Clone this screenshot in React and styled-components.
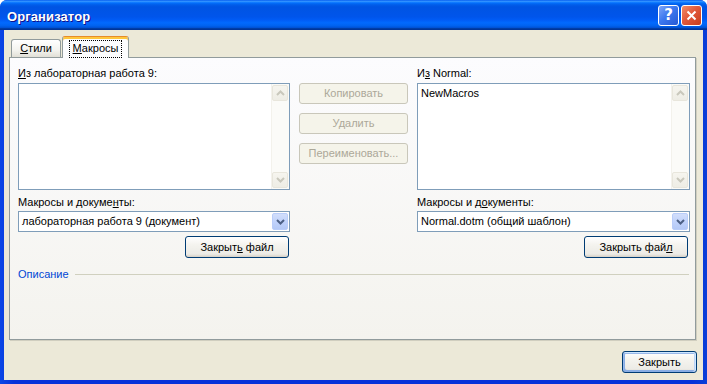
import React from "react"
import styled, { createGlobalStyle, css } from "styled-components"

const GlobalStyle = createGlobalStyle`
  html, body {
    margin: 0;
    padding: 0;
    background: #ffffff;
  }
  body {
    font-family: "Liberation Sans", Arial, sans-serif;
    font-size: 11px;
    color: #000000;
  }
`

const Window = styled.div`
  width: 707px;
  height: 384px;
  display: flex;
  flex-direction: column;
  background: linear-gradient(90deg, #0a46e6 0%, #0831d9 2%, #0831d9 98%, #0a3fd8 100%);
  border-radius: 7px 7px 0 0;
  overflow: hidden;
`

const TitleBar = styled.div`
  height: 30px;
  flex: 0 0 30px;
  display: flex;
  align-items: center;
  padding: 0 5px 0 7px;
  background: linear-gradient(
    180deg,
    #0058ee 0%,
    #3593ff 4%,
    #288eff 6%,
    #127dff 8%,
    #036ffc 10%,
    #0262ee 14%,
    #0057e5 20%,
    #0054e3 24%,
    #0055eb 56%,
    #005bf5 66%,
    #026afe 76%,
    #0062ef 86%,
    #0052d6 92%,
    #0040ab 94%,
    #003092 100%
  );
`

const Title = styled.div`
  flex: 1;
  color: #ffffff;
  font-family: "Liberation Sans", Arial, sans-serif;
  font-weight: bold;
  font-size: 13px;
  letter-spacing: 0.1px;
  text-shadow: 1px 1px #0f1089;
  padding-top: 2px;
`

const CaptionButton = styled.div`
  width: 21px;
  height: 21px;
  box-sizing: border-box;
  border: 1px solid #ffffff;
  border-radius: 3px;
  display: flex;
  align-items: center;
  justify-content: center;
  margin-left: 2px;
  ${p =>
    p.$close
      ? css`
          background: radial-gradient(circle at 90% 90%, #cc4600 0%, #dc6527 55%, #cd7546 70%, #e9b0a0 100%);
          background: linear-gradient(135deg, #f08c6a 0%, #e1593b 45%, #c93d1b 100%);
        `
      : css`
          background: linear-gradient(135deg, #7fa6f8 0%, #3c78ef 45%, #2658d4 100%);
        `}
`

const HelpMark = styled.span`
  color: #ffffff;
  font-family: "DejaVu Sans", sans-serif;
  font-weight: bold;
  font-size: 15px;
  line-height: 1;
`

const Body = styled.div`
  flex: 1;
  margin: 0 4px 4px;
  background: #ece9d8;
  display: flex;
  flex-direction: column;
  padding: 6px 7px 0 5px;
`

const TabStrip = styled.div`
  display: flex;
  align-items: flex-end;
  height: 21px;
  padding-left: 2px;
  position: relative;
  z-index: 1;
`

const Tab = styled.div`
  box-sizing: border-box;
  display: flex;
  align-items: center;
  justify-content: center;
  border: 1px solid #919b9c;
  border-bottom: none;
  border-radius: 3px 3px 0 0;
  ${p =>
    p.$active
      ? css`
          width: 67px;
          height: 22px;
          margin-bottom: -1px;
          margin-left: 1px;
          background: #fcfcfe;
          border-top: 1px solid #e68b2c;
          box-shadow: inset 0 2px 0 #ffc73c;
          padding-top: 2px;
        `
      : css`
          width: 50px;
          height: 18px;
          background: linear-gradient(180deg, #ffffff 0%, #f3f3ef 60%, #e1dfd6 100%);
        `}
`

const TabLabel = styled.span`
  padding: 1px 3px 2px;
  border: 1px dotted ${p => (p.$focused ? "#000000" : "transparent")};
  line-height: 13px;
`

const Panel = styled.div`
  flex: 1;
  border: 1px solid #919b9c;
  background: linear-gradient(180deg, #fcfcfe 0%, #f4f3ee 100%);
  box-shadow: 1px 1px 0 #d0cebf;
  padding: 8px 5px 0 8px;
  display: grid;
  grid-template-columns: 272px 109px 273px;
  grid-template-rows: auto auto;
  column-gap: 9px;
  align-content: start;
`

const Column = styled.div`
  display: flex;
  flex-direction: column;
`

const Label = styled.div`
  line-height: 14px;
  height: 14px;
  margin-bottom: ${p => p.$gap || 3}px;
  margin-top: ${p => p.$top || 0}px;
`

const U = styled.span`
  text-decoration: underline;
  text-underline-offset: 1px;
`

const ListBox = styled.div`
  height: 107px;
  box-sizing: border-box;
  border: 1px solid #7f9db9;
  background: #ffffff;
  display: flex;
`

const ListItems = styled.div`
  flex: 1;
  padding: 3px 3px;
  line-height: 13px;
`

const ScrollTrack = styled.div`
  width: 17px;
  display: flex;
  flex-direction: column;
  justify-content: space-between;
  background: #fbfbf8;
  border-left: 1px solid #f3f2ec;
`

const ScrollArrow = styled.div`
  width: 16px;
  height: 16px;
  box-sizing: border-box;
  margin: 1px 0 1px 0;
  border: 1px solid #e8e6dc;
  border-radius: 2px;
  background: linear-gradient(180deg, #f6f5ef 0%, #eeede5 100%);
  display: flex;
  align-items: center;
  justify-content: center;
`

const Combo = styled.div`
  height: 21px;
  box-sizing: border-box;
  border: 1px solid #7f9db9;
  background: #ffffff;
  display: flex;
  align-items: center;
  padding: 1px;
`

const ComboText = styled.div`
  flex: 1;
  padding-left: 2px;
  line-height: 17px;
`

const ComboArrow = styled.div`
  width: 16px;
  height: 17px;
  box-sizing: border-box;
  border: 1px solid #b9cdf9;
  border-radius: 2px;
  background: linear-gradient(180deg, #d2defb 0%, #c1d3fb 50%, #b4c9f6 100%);
  display: flex;
  align-items: center;
  justify-content: center;
`

const Button = styled.div`
  box-sizing: border-box;
  height: ${p => p.$h || 22}px;
  width: ${p => p.$w}px;
  border-radius: 3px;
  display: flex;
  align-items: center;
  justify-content: center;
  line-height: 13px;
  ${p =>
    p.$disabled
      ? css`
          border: 1px solid #c9c7ba;
          background: #f5f4ea;
          color: #aca899;
        `
      : css`
          border: 1px solid #003c74;
          background: linear-gradient(180deg, #ffffff 0%, #f4f3ee 40%, #ecebe6 85%, #d6d0c5 100%);
          color: #000000;
        `}
  ${p =>
    p.$default &&
    css`
      box-shadow: inset -1px 1px #cee7ff, inset 1px 2px #98b8ea, inset -2px 0 #bcd4f6, inset 1px -1px #89ade4,
        inset 2px -2px #89ade4;
    `}
`

const ButtonRow = styled.div`
  display: flex;
  justify-content: flex-end;
  margin-top: 4px;
  padding-right: ${p => p.$right || 0}px;
`

const Actions = styled.div`
  display: flex;
  flex-direction: column;
  gap: 9px;
  padding-top: 17px;
`

const Group = styled.div`
  grid-column: 1 / -1;
  display: flex;
  align-items: center;
  gap: 6px;
  margin-top: 9px;
  height: 14px;
`

const GroupTitle = styled.span`
  color: #0046d5;
  line-height: 14px;
`

const GroupLine = styled.div`
  flex: 1;
  height: 1px;
  background: #d0d0bf;
  margin-right: 1px;
`

const Footer = styled.div`
  display: flex;
  justify-content: flex-end;
  padding: 11px 0 7px;
  margin-right: -1px;
`

const Chevron = ({ up, color }) => (
  <svg width="9" height="6" viewBox="0 0 9 6">
    <path
      d={up ? "M1 5 L4.5 1.5 L8 5" : "M1 1 L4.5 4.5 L8 1"}
      fill="none"
      stroke={color}
      strokeWidth="2"
    />
  </svg>
)

const CloseGlyph = () => (
  <svg width="11" height="11" viewBox="0 0 11 11">
    <path d="M1.5 1.5 L9.5 9.5 M9.5 1.5 L1.5 9.5" stroke="#ffffff" strokeWidth="2" fill="none" />
  </svg>
)

const MacroList = ({ items = [] }) => (
  <ListBox>
    <ListItems>
      {items.map(item => (
        <div key={item}>{item}</div>
      ))}
    </ListItems>
    <ScrollTrack>
      <ScrollArrow>
        <Chevron up color="#c9c8bc" />
      </ScrollArrow>
      <ScrollArrow>
        <Chevron color="#c9c8bc" />
      </ScrollArrow>
    </ScrollTrack>
  </ListBox>
)

const DocCombo = ({ value }) => (
  <Combo>
    <ComboText>{value}</ComboText>
    <ComboArrow>
      <Chevron color="#4d6185" />
    </ComboArrow>
  </Combo>
)

export default function App() {
  return (
    <>
      <GlobalStyle />
      <Window>
        <TitleBar>
          <Title>Организатор</Title>
          <CaptionButton>
            <HelpMark>?</HelpMark>
          </CaptionButton>
          <CaptionButton $close>
            <CloseGlyph />
          </CaptionButton>
        </TitleBar>
        <Body>
          <TabStrip>
            <Tab>
              <TabLabel>
                <U>С</U>тили
              </TabLabel>
            </Tab>
            <Tab $active>
              <TabLabel $focused>
                <U>М</U>акросы
              </TabLabel>
            </Tab>
          </TabStrip>
          <Panel>
            <Column>
              <Label>
                <U>И</U>з лабораторная работа 9:
              </Label>
              <MacroList />
              <Label $top={5} $gap={2}>
                Макросы и докуме<U>н</U>ты:
              </Label>
              <DocCombo value="лабораторная работа 9 (документ)" />
              <ButtonRow $right={1}>
                <Button $w={104}>
                  Закрыт<U>ь</U>&nbsp;файл
                </Button>
              </ButtonRow>
            </Column>
            <Actions>
              <Button $disabled $h={21}>Копировать</Button>
              <Button $disabled $h={21}>Удалить</Button>
              <Button $disabled $h={21}>Переименовать...</Button>
            </Actions>
            <Column>
              <Label>
                И<U>з</U> Normal:
              </Label>
              <MacroList items={["NewMacros"]} />
              <Label $top={5} $gap={2}>
                Макросы и д<U>о</U>кументы:
              </Label>
              <DocCombo value="Normal.dotm (общий шаблон)" />
              <ButtonRow $right={2}>
                <Button $w={104}>
                  Закрыть фай<U>л</U>
                </Button>
              </ButtonRow>
            </Column>
            <Group>
              <GroupTitle>Описание</GroupTitle>
              <GroupLine />
            </Group>
          </Panel>
          <Footer>
            <Button $w={75} $default>
              Закрыть
            </Button>
          </Footer>
        </Body>
      </Window>
    </>
  )
}
